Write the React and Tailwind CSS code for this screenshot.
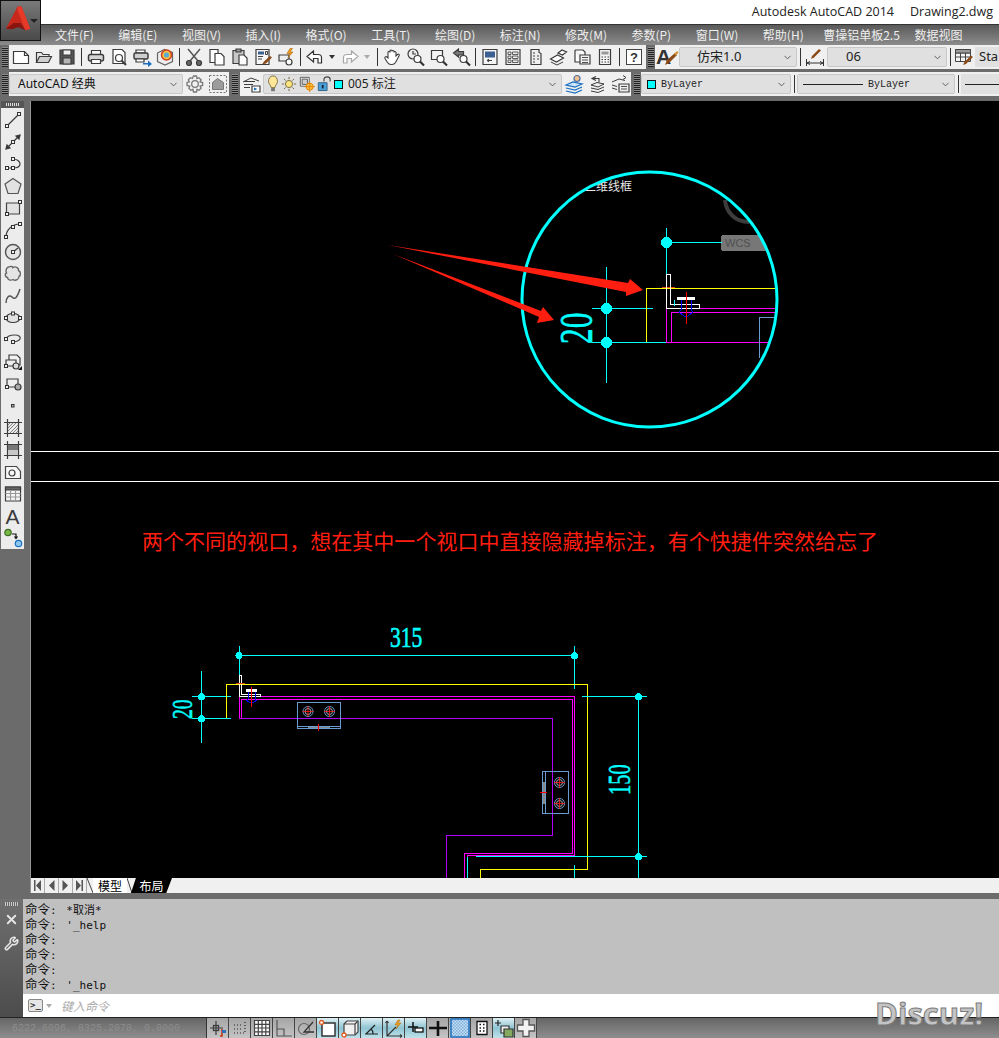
import {useId} from "react";
import {ChevronDown, X, Wrench} from "lucide-react";

const menus = [
    {label: "文件(F)"},
    {label: "编辑(E)"},
    {label: "视图(V)"},
    {label: "插入(I)"},
    {label: "格式(O)"},
    {label: "工具(T)"},
    {label: "绘图(D)"},
    {label: "标注(N)"},
    {label: "修改(M)"},
    {label: "参数(P)"},
    {label: "窗口(W)"},
    {label: "帮助(H)"},
    {label: "曹操铝单板2.5", className: "-ml-[5px]"},
    {label: "数据视图", className: "-ml-[10px]"},
];

const Ic = ({children, size = 20}) => (
    <svg width={size} height={size} viewBox="0 0 20 20" fill="none" stroke="#3c3c3c" strokeWidth="1.2">
        {children}
    </svg>
);

const Nd = ({x, y}) => <rect x={x - 1.5} y={y - 1.5} width="3" height="3" fill="#f4f4f4" stroke="#333" strokeWidth="1"/>;

const Btn = ({children, w = "w-[23px]"}) => <div className={`flex items-center justify-center h-full ${w}`}>{children}</div>;

const Sep = ({w = "w-[6px]"}) => (
    <div className={`flex items-center justify-center h-full ${w}`}>
        <div className="w-px h-[18px] bg-[#333]"/>
    </div>
);

const Grip = () => (
    <div className="w-[6px] h-[20px] bg-[repeating-linear-gradient(0deg,#222_0,#222_1px,#8a8a8a_1px,#8a8a8a_2px)]"/>
);

const Combo = ({children, className}) => (
    <div className={`flex items-center h-[20px] bg-[#e0e0e0] rounded-[2px] border border-[#c8c8c8] ${className}`}>
        <div className="flex-1 min-w-0 flex items-center overflow-hidden whitespace-nowrap">{children}</div>
        <ChevronDown size={11} color="#555" className="mr-[3px] shrink-0"/>
    </div>
);

const NewIcon = () => <Ic><path d="M2.5 4.5h11l4 4v8h-15z" fill="#fff"/><path d="M13.5 4.5v4h4"/></Ic>;
const OpenIcon = () => <Ic><path d="M2.5 15.5v-10h5l1.5 2h6v2" fill="#e8e8e8"/><path d="M2.5 15.5l3-6h12l-3 6z" fill="#cfcfcf"/></Ic>;
const SaveIcon = () => <Ic><path d="M3 3h14v14H3z" fill="#555"/><path d="M6 3h8v5H6z" fill="#f1f1f1"/><path d="M6 11h8v6H6z" fill="#b5b5b5"/></Ic>;
const PrintIcon = () => <Ic><path d="M5.5 3.5h9v4h-9z" fill="#fff"/><rect x="2.5" y="7.5" width="15" height="6.5" rx="2" fill="#d5d5d5" strokeWidth="1.5"/><path d="M5.5 12.5h9v4h-9z" fill="#fff"/></Ic>;
const PreviewIcon = () => <Ic><path d="M4 2.5h9l3 3v11H4z" fill="#fff"/><circle cx="10" cy="11" r="3.5"/><path d="M12.5 13.5l4.5 4.5" strokeWidth="2"/></Ic>;
const PublishIcon = () => <Ic><path d="M4 3h9v3H4z" fill="#fff"/><rect x="2" y="6" width="14" height="6" rx="1.5" fill="#cfcfcf" strokeWidth="1.5"/><path d="M4 12h8v3H4z" fill="#fff"/><path d="M11 16h5v-2.5l4 3.5-4 3v-2.500h-5z" fill="#1c6fc0" stroke="none"/></Ic>;
const PlotIcon = () => (
    <Ic>
        <path d="M2.500 6l7-3.500 8 3v9l-7.500 3.500-7.500-3.500z" fill="#eee" stroke="#666"/>
        <circle cx="11.500" cy="8" r="5" fill="#f0c040" stroke="#d04020" strokeWidth="1.500"/>
        <circle cx="11.500" cy="8" r="2.500" fill="#58a8d8" stroke="none"/>
    </Ic>
);
const CutIcon = () => (
    <Ic>
        <path d="M4 2l10 12M16 2L6 14" strokeWidth="1.500" stroke="#555"/>
        <circle cx="5" cy="16" r="2.500" fill="#666"/>
        <circle cx="15" cy="16" r="2.500" fill="#666"/>
    </Ic>
);
const CopyIcon = () => <Ic><path d="M3 2.500h8v13H3z" fill="#fff"/><path d="M8 6.500h6l3 3v8.500H8z" fill="#fff"/></Ic>;
const PasteIcon = () => <Ic><path d="M3 3.500h11v13H3z" fill="#c8c8c8"/><path d="M6 2h5v3H6z" fill="#999"/><path d="M9 8h5l3 3v7H9z" fill="#fff"/></Ic>;
const MatchIcon = () => (
    <Ic>
        <path d="M3 2.500h13v15H3z" fill="#f6f6f6"/>
        <path d="M5 4.500h6v3H5z" fill="#3b5f90" stroke="none"/>
        <path d="M12.500 4.500h2v3h-2zM5 9.500h5M5 12h4" strokeWidth="1"/>
        <path d="M9 17.500l4-1 6-6-2-1.500-6 5.500z" fill="#8a4a18" stroke="none"/>
    </Ic>
);
const BlockIcon = () => (
    <Ic>
        <path d="M3 8h10v6H3z" fill="#eee"/>
        <circle cx="13" cy="15" r="3" fill="#fff"/>
        <path d="M14 1.500l-3 5h3l-2 4 5-5.500h-3l2.500-3.500z" fill="#f0a020" stroke="#b06000" strokeWidth=".6"/>
    </Ic>
);
const UndoIcon = ({stroke = "#333", fill = "#fff"}) => (
    <Ic><path d="M8.500 4l-6.500 5.500 6.500 5.500v-3.500h4.500v4.500h3.500v-5.500c0-2-1.500-3-3.500-3H8.500z" fill={fill} stroke={stroke}/></Ic>
);
const RedoIcon = () => (
    <Ic><path d="M11.500 4l6.500 5.500-6.500 5.500v-3.500H7v4.500H3.500v-5.500c0-2 1.500-3 3.500-3h4.500z" fill="#fff" stroke="#a8a8a8"/></Ic>
);
const HandIcon = () => (
    <Ic><path d="M5 11V5.500c0-1.400 2-1.400 2 0V4c0-1.400 2-1.400 2 0v.5c0-1.400 2-1.400 2 0v1c0-1.400 2-1.400 2 0V9l1.500-1.500c1-1 2.500 0 1.500 1.500l-3.500 6.500c-1 1.500-2 2-3.500 2H8c-1.500 0-2.500-.5-3.500-2L2 11.500c-.8-1.400 1-2.500 2-1.500z" fill="#fff" strokeWidth="1.100"/></Ic>
);
const ZoomIcon = ({children}) => (
    <Ic>
        {children}
        <circle cx="11.500" cy="12" r="3.500" fill="#fff"/>
        <path d="M14 14.500l4 4" strokeWidth="2.200" stroke="#333"/>
    </Ic>
);
const PropsIcon = () => (
    <Ic>
        <path d="M3 2.500h14v15H3z" fill="#f5f5f5"/>
        <path d="M5 4.500h10v6H5z" fill="#3b5f90" stroke="none"/>
        <path d="M12 13.500H7m0 0l2-1.500m-2 1.500l2 1.500" strokeWidth="1"/>
    </Ic>
);
const GridBtnIcon = () => (
    <Ic>
        <path d="M3 2.500h14v15H3z" fill="#eee"/>
        <path d="M5 5h3v2.500H5zM9.500 5h5.500v2.500H9.500zM5 9h3v2.500H5zM9.500 9h5.500v2.500H9.500zM5 13h3v2.500H5zM9.500 13h5.500v2.500H9.500z" strokeWidth=".8"/>
    </Ic>
);
const PaletteIcon = () => <Ic><path d="M5 2.500h8v3l2 1v11H5z" fill="#eee"/><path d="M7 6h2M7 9h2M7 12h2M7 15h2M11 9h2M11 12h2" strokeWidth="1.200"/></Ic>;
const SheetIcon = () => (
    <Ic>
        <path d="M1.500 12l7-4 6 3-7 4z" fill="#fff"/>
        <path d="M9 6l4-3 4.500 2-4 3z" fill="#fff"/>
        <path d="M2 15l6 3 6-3" strokeWidth="1"/>
    </Ic>
);
const MarkupIcon = () => (
    <Ic>
        <path d="M3 3h8l2 2v3M3 3v12h5" fill="#fff"/>
        <path d="M8 8h10v9H8z" fill="#f2f2f2"/>
        <path d="M10 10.500h6M10 13h6M10 15.500h6" strokeWidth=".9"/>
    </Ic>
);
const CalcIcon = () => (
    <Ic>
        <path d="M4.500 2.500h11v15h-11z" fill="#f4f4f4"/>
        <path d="M6.500 4.500h7v3h-7z" fill="#999" stroke="none"/>
        <path d="M6.500 10h1.500M9.500 10H11M12.500 10H14M6.500 12.500h1.500M9.500 12.500H11M12.500 12.500H14M6.500 15h1.500M9.500 15H11M12.500 15H14" strokeWidth="1.200"/>
    </Ic>
);
const HelpIcon = () => (
    <svg width="20" height="20" viewBox="0 0 20 20">
        <rect x="2.500" y="2.500" width="15" height="15" fill="#fff" stroke="#444"/>
        <text x="10" y="15" textAnchor="middle" className="font-['Liberation_Sans',sans-serif] text-[13px] font-bold" fill="#333">?</text>
    </svg>
);
const TextStyleIcon = () => (
    <svg width="24" height="22" viewBox="0 0 24 22">
        <text x="1" y="18" className="font-['Liberation_Sans',sans-serif] text-[21px] font-bold" fill="#333">A</text>
        <path d="M10 19l4-2 8-8-2-2-8 7z" fill="#8a4a18"/>
        <path d="M19 8l3-3 1.500 1.500-2.500 3z" fill="#d09030"/>
    </svg>
);
const DimIcon = () => (
    <svg width="20" height="20" viewBox="0 0 20 20" fill="none" stroke="#333">
        <path d="M1.500 12v7M18.500 12v7M2 16h16M2 16l3-1.500M2 16l3 1.500M18 16l-3-1.500M18 16l-3 1.500"/>
        <path d="M6 12l3-1.500 7-7-2-1.500-7 7z" fill="#8a4a18" stroke="none"/>
    </svg>
);
const TableStyleIcon = () => (
    <svg width="20" height="20" viewBox="0 0 20 20" fill="none" stroke="#444">
        <path d="M1.500 2.500h15v12h-15zM1.500 6h15M1.500 10h15M6.500 6v8.500M11.500 6v8.500" fill="#f5f5f5"/>
        <path d="M1.500 2.500h15V6h-15z" fill="#999"/>
        <path d="M9 18l3-1 7-7-2-1.500-6.500 6.500z" fill="#8a4a18" stroke="none"/>
    </svg>
);
const GearIcon = () => (
    <svg width="20" height="20" viewBox="0 0 20 20" fill="none" stroke="#777" strokeWidth="1.300">
        <circle cx="10" cy="10" r="3.300"/>
        <path d="M8.500 2h3l.5 2.500 2-.8 2.100 2.100-1 2 2.500.7v3l-2.500.7 1 2-2.100 2.100-2-1-.5 2.700h-3l-.6-2.700-2 1-2.100-2.100 1-2L2 11.500v-3l2.300-.7-1-2 2.100-2.100 2 .8z"/>
    </svg>
);
const WorkspaceIcon = () => (
    <svg width="20" height="20" viewBox="0 0 20 20" fill="none" stroke="#777">
        <path d="M1.500 1.500h17v17h-17z" strokeDasharray="2 1.500"/>
        <path d="M4.500 15.500v-7l5-4 6 4v7z" fill="#9c9c9c"/>
    </svg>
);
const LayerMgrIcon = () => (
    <Ic>
        <path d="M2 8l8-4 8 3" strokeWidth="1"/>
        <path d="M3 7.500h11M3 10.500h9M3 13.500h6" strokeWidth="1"/>
        <path d="M11 12h8v6h-8z" fill="#fff"/>
        <path d="M13 14l2 1-2 1" fill="#1c6fc0" stroke="#1c6fc0"/>
    </Ic>
);
const BulbIcon = () => (
    <svg width="12" height="18" viewBox="0 0 16 20" preserveAspectRatio="none">
        <path d="M8 1C4 1 2 4 2 7c0 3 3 4 3.500 7h5C11 11 14 10 14 7c0-3-2-6-6-6z" fill="#ffe79a" stroke="#6e6030"/>
        <path d="M5.500 14.500h5V18h-5z" fill="#777"/>
    </svg>
);
const SunIcon = () => (
    <svg width="16" height="16" viewBox="0 0 18 18" stroke="#6e6030" fill="#ffe680">
        <circle cx="9" cy="9" r="4"/>
        <path d="M9 1v2.500M9 14.500V17M1 9h2.500M14.500 9H17M3.300 3.300l1.800 1.800M12.900 12.900l1.800 1.800M14.700 3.300l-1.800 1.800M5.100 12.900l-1.800 1.800"/>
    </svg>
);
const VpSunIcon = () => (
    <svg width="16" height="16" viewBox="0 0 18 18">
        <path d="M1.500 1.500h10v10h-10z" fill="#eee" stroke="#555"/>
        <path d="M3.500 3.500h6v6h-6z" fill="#ccc" stroke="#555"/>
        <circle cx="12" cy="12" r="4" fill="#ffc040" stroke="#e08000"/>
        <path d="M12 6v12M6 12h12" stroke="#e08000"/>
    </svg>
);
const LockIcon = () => (
    <svg width="14" height="18" viewBox="0 0 16 20" fill="none">
        <path d="M8 7V4.500C8 1 15 1 15 4.500V7" stroke="#444" strokeWidth="1.300"/>
        <path d="M1.500 8.500h10v9h-10z" fill="#4aa0d8" stroke="#2a5a80"/>
        <rect x="5.500" y="11" width="2" height="4" fill="#123"/>
    </svg>
);
const LayerFreezeIcon = () => (
    <Ic>
        <circle cx="13" cy="4.500" r="3" fill="#f0c090" stroke="#5070a0"/>
        <path d="M2 11l7-3 9 2-7 3z" fill="#cfe4f6" stroke="#1c6fc0"/>
        <path d="M2 14l9 2 7-3M2 17l9 2 7-3" stroke="#1c6fc0"/>
    </Ic>
);
const LayerPrevIcon = () => (
    <Ic>
        <path d="M9 2.500L5 4.500l4 2M5 4.500h7v4" strokeWidth="1.100"/>
        <path d="M4 11l6-2.500 7 1.500-6 3zM4 14l7 1.500 6-2.500M4 17l7 1.500 6-2.500" strokeWidth="1"/>
    </Ic>
);
const LayerIsoIcon = () => (
    <Ic>
        <path d="M2 8l7-3 6 1.500M2 11l5 1.500M2 14l5 1.500" strokeWidth="1"/>
        <path d="M13 1.500l3 2-3 2" strokeWidth="1"/>
        <path d="M9 10h10v8H9z" fill="#eee"/>
        <path d="M11 12.500h6M11 15h6" strokeWidth=".9"/>
    </Ic>
);

// left draw palette
const paletteIcons = [
    <Ic key="line"><path d="M4 16L16 4"/><Nd x={4} y={16}/><Nd x={16} y={4}/></Ic>,
    <Ic key="xline"><path d="M3 17L17 3" /><path d="M3 17l1-4 3 3zM17 3l-1 4-3-3z" fill="#333"/><Nd x={10} y={10}/></Ic>,
    <Ic key="pline"><path d="M4 14h6c4 0 7-1.500 7-4s-3-5-7-5"/><Nd x={4} y={14}/><Nd x={10} y={14}/><Nd x={10} y={5}/></Ic>,
    <Ic key="polygon"><path d="M10 2.500l8 5.500-3 9.500H5L2 8z" fill="#e2e2e2" stroke="#555"/></Ic>,
    <Ic key="rect"><path d="M3.500 5h13v11h-13z" fill="#e2e2e2" stroke="#444"/><Nd x={4} y={16}/><Nd x={17} y={4}/></Ic>,
    <Ic key="arc"><path d="M3 17c0-7 6-13 14-13"/><Nd x={3} y={17}/><Nd x={10} y={7}/><Nd x={17} y={4}/></Ic>,
    <Ic key="circle"><circle cx="10" cy="10" r="7.500" fill="#e4e4e4" stroke="#555" strokeWidth="1.400"/><path d="M10 10l5-4"/><Nd x={10} y={10}/></Ic>,
    <Ic key="cloud"><path d="M6 3c2-1.500 4 0 4 .5 2-1.500 6 0 5.500 3 2.500 1 2.500 5 .5 6 .5 2.500-3.500 5-6 3-2.500 1.500-5.500 0-5.500-2C2 13 1.500 9.500 3.500 9 2 6 4 3 6 3z" fill="#e4e4e4" stroke="#666" strokeWidth="1.400"/></Ic>,
    <Ic key="spline"><path d="M3 17c0-5 3-9 6-6s5 1 8-8" stroke="#555" strokeWidth="1.500"/></Ic>,
    <Ic key="ellipse"><ellipse cx="10" cy="10" rx="7" ry="4.500" fill="#e2e2e2"/><Nd x={3} y={10}/><Nd x={17} y={10}/><Nd x={10} y={5.500}/></Ic>,
    <Ic key="earc"><path d="M3 9c1-3 5-4 9-4s6 2 5 4-5 3-7 3" stroke="#444"/><Nd x={3} y={9}/><Nd x={10} y={12}/></Ic>,
    <Ic key="insert"><path d="M6 8V3h8l3 3v7h-3" fill="#f2f2f2"/><path d="M3 8h10v6H3z" fill="#eee"/><circle cx="13" cy="14" r="3" fill="#ddd"/><Nd x={3} y={14}/><path d="M15 18h4v-4z" fill="#111" stroke="none"/></Ic>,
    <Ic key="block"><path d="M4 5h11v8H4z" fill="#eee"/><circle cx="15" cy="13" r="3" fill="#aaa"/><Nd x={4} y={13}/></Ic>,
    <Ic key="point"><rect x="8.500" y="8.500" width="2.500" height="2.500" fill="#bbb" stroke="#333" strokeWidth="1"/></Ic>,
    <Ic key="hatch"><path d="M4.500 1v18M15.500 1v18M1 4.500h18M1 15.500h18"/><path d="M5 7l2-2M5 10l5-5M5 13l8-8M7 15l8-8M10 15l5-5M13 15l2-2" stroke="#777" strokeWidth=".9"/></Ic>,
    <Ic key="gradient"><path d="M4.500 1v18M15.500 1v18M1 4.500h18M1 15.500h18"/><path d="M5 5h10v10H5z" fill="#777" stroke="none"/><path d="M5 10h10v5H5z" fill="#c8c8c8" stroke="none"/></Ic>,
    <Ic key="region"><path d="M2.500 4.500h11l4 5v7h-15z" fill="#f6f6f6" stroke="#444"/><circle cx="9" cy="11" r="3" /></Ic>,
    <Ic key="table"><path d="M2.500 3h15v14h-15z" fill="#f6f6f6"/><path d="M2.500 3h15v3h-15z" fill="#666"/><path d="M2.500 9.500h15M2.500 13h15M7.500 6v11M12.500 6v11" stroke="#999"/></Ic>,
    <div key="text" className="font-['Liberation_Sans',sans-serif] text-[21px] leading-none text-[#3a3a3a]">A</div>,
    <Ic key="addsel"><circle cx="5" cy="4.500" r="3.200" fill="#7ab648" stroke="#3a7020"/><path d="M9 6h4v4M11.500 8.500l1.500 2 1.500-2" stroke="#111"/><circle cx="15.500" cy="15.500" r="3.200" fill="#8cc8f0" stroke="#1c6fc0"/></Ic>,
];

const StatusIcon = ({i}) => {
    switch (i) {
        case 0:
            return <Ic><path d="M8 3v14M2 10h13"/><rect x="5.500" y="7.500" width="5" height="5" fill="none" strokeWidth="1.300"/><path d="M14 11v7h-2" stroke="#c83010" strokeWidth="1.500"/><rect x="14" y="12" width="4" height="3" fill="#2a70c0" stroke="none"/></Ic>;
        case 1:
            return <Ic><path d="M4 15h12M15 4v11" strokeDasharray="1 2" stroke="#222"/><path d="M4 7h9M4 11h9" strokeDasharray="1 2" stroke="#222"/></Ic>;
        case 2:
            return <Ic><path d="M2.500 2.500h15v15h-15zM2.500 6.300h15M2.500 10h15M2.500 13.800h15M6.300 2.500v15M10 2.500v15M13.800 2.500v15" fill="#fff" stroke="#444"/></Ic>;
        case 3:
            return <Ic><path d="M3 2v16h15M3 11h7v7" stroke="#555"/></Ic>;
        case 4:
            return <Ic><circle cx="8" cy="11" r="5.500" stroke="#666"/><path d="M17 4L8 14h10" stroke="#333" strokeWidth="1.300"/></Ic>;
        case 5:
            return <Ic><path d="M4 5h13v13H4z" fill="#fff" stroke="#333" strokeWidth="1.500"/><circle cx="3.500" cy="4.500" r="2" fill="#fff" stroke="#e05a20" strokeWidth="1.300"/></Ic>;
        case 6:
            return <Ic><path d="M4 6l3-3h11v11l-3 3H4z" fill="#f0f0f0" stroke="#444"/><path d="M4 6h11v11M15 6l3-3" stroke="#444"/><circle cx="4" cy="17" r="2" fill="#fff" stroke="#e05a20" strokeWidth="1.300"/></Ic>;
        case 7:
            return <Ic><path d="M4 16L13 7M3 16h13" stroke="#222" strokeWidth="1.200"/><path d="M9 11c1.500 1 2 3 2 5" stroke="#222"/></Ic>;
        case 8:
            return <Ic><path d="M3 3v15h15M3 18L12 9" stroke="#333"/><path d="M3 3l-1.500 2M3 3l1.500 2M18 18l-2-1.500M18 18l-2 1.500" stroke="#333"/><path d="M14 2l-3 5h3l-2 4 5-6h-3l2-3z" fill="#f0a020" stroke="#b06000" strokeWidth=".5"/></Ic>;
        case 9:
            return <Ic><path d="M2 9h10M7 4v10" stroke="#111" strokeWidth="1.500"/><rect x="9" y="10" width="8" height="4" fill="#fff" stroke="#111" strokeWidth="1.300"/></Ic>;
        case 10:
            return <Ic><path d="M1 10h18M10 3v15" stroke="#111" strokeWidth="2.600"/></Ic>;
        case 11:
            return (
                <svg width="20" height="20" viewBox="0 0 20 20">
                    <defs>
                        <pattern id="transpCheck" width="3" height="3" patternUnits="userSpaceOnUse">
                            <rect width="3" height="3" fill="#c8dff2"/>
                            <rect width="1.500" height="1.500" fill="#7fb0dc"/>
                            <rect x="1.500" y="1.500" width="1.500" height="1.500" fill="#7fb0dc"/>
                        </pattern>
                    </defs>
                    <rect x="1" y="1" width="18" height="18" fill="url(#transpCheck)" stroke="#1c6fc0" strokeWidth="1.500"/>
                </svg>
            );
        case 12:
            return <Ic><path d="M5 3.500h10v13H5z" fill="#fff" stroke="#111" strokeWidth="1.300"/><path d="M7.500 6.500h1.500M11 6.500h1.500M7.500 10h1.500M11 10h1.500M7.500 13h1.500M11 13h1.500" stroke="#111" strokeWidth="1.500"/></Ic>;
        case 13:
            return <Ic><path d="M1 5h6M4 2v6" stroke="#222"/><path d="M7 8h8v7H7z" fill="#eee" stroke="#333"/><path d="M10 11h9v8h-9z" fill="#84a860" stroke="#333"/></Ic>;
        default:
            return <Ic><path d="M7 1.500h6V7h5.500v6H13v5.500H7V13H1.500V7H7z" fill="#f2f2f2" stroke="#555" strokeWidth="1.300"/></Ic>;
    }
};

const activeStatus = [5, 6, 7, 8, 9, 13];

// viewport drawing, coordinates are page pixels
const CadDrawing = () => {
    const clipId = useId();
    const cyan = "#00ffff";
    const magenta = "#ff00ff";
    const yellow = "#ffff00";
    const violet = "#b400ff";
    const steel = "#6a9ad0";
    return (
        <svg className="block" width="968" height="777" viewBox="31 101 968 777" fill="none" shapeRendering="crispEdges">
            <defs>
                <clipPath id={clipId}>
                    <circle cx="649.500" cy="299.500" r="127"/>
                </clipPath>
            </defs>

            <path d="M31 451.500h968M31 481.500h968" stroke="#fff"/>

            {/* top viewport, seen through the round clip */}
            <g clipPath={`url(#${clipId})`}>
                <path d="M725 200c1 12 10 22 24 22" stroke="#3c3c3c" strokeWidth="4" shapeRendering="auto"/>
                <rect x="721" y="235" width="46" height="16" rx="3" fill="#777"/>
                <text x="725" y="247" fill="#505050" className="font-['Liberation_Sans',sans-serif] text-[11px]">WCS</text>
                <text x="584" y="191" fill="#e8e8e8" className="font-['Noto_Sans_CJK_SC',sans-serif] text-[12px]">二维线框</text>

                <path d="M666.500 228v46M666 242.500h56" stroke={cyan}/>
                <path d="M606.500 267v116M592 308.500h61M592 342.500h61M653 342.500h13" stroke={cyan}/>
                <path d="M646.500 342V288.500H776" stroke={yellow}/>
                <path d="M666.500 342.500v-34H776M671.500 342.500v-30H776M666.500 342.500H770" stroke={magenta}/>
                <path d="M759.500 358v-40.500H776" stroke={steel}/>
                <path d="M662 287.500h13" stroke="#e04a10"/>
                <path d="M666.500 274.500h4v30h29v4h-33z" stroke="#fff"/>
                <path d="M677 297.500h17v2h-17z" fill="#fff" stroke="#fff"/>
                <path d="M681 300v10l-2 2 5 4h4l5-4-2-2v-10" stroke="#0000ff"/>
                <path d="M686.500 292v32" stroke="#ff0000"/>
                <path d="M674.500 300v6" stroke={cyan}/>
            </g>

            <circle cx="649.500" cy="299.500" r="127.500" stroke={cyan} strokeWidth="3" shapeRendering="auto"/>
            <circle cx="666.500" cy="242.500" r="5.500" fill={cyan}/>
            <circle cx="606.500" cy="308.500" r="5.500" fill={cyan}/>
            <circle cx="606.500" cy="342.500" r="5.500" fill={cyan}/>
            <text transform="translate(592 344) rotate(-90) scale(.68 1)" fill={cyan} stroke={cyan} strokeWidth=".6" shapeRendering="auto" className="font-['Liberation_Serif',serif] text-[46px]">20</text>

            {/* the two red arrows drawn over the screen */}
            <g shapeRendering="auto" fill="#ff1e10">
                <path d="M388 245L628 283l2-4 13 11-17 6 0-4z"/>
                <path d="M393 254L541 311l2-4 11 13-17 3 2-6z"/>
            </g>

            <text x="142" y="549" fill="#ff1e10" textLength="736" className="font-['Noto_Sans_CJK_SC',sans-serif] text-[21px]" shapeRendering="auto">
                两个不同的视口，想在其中一个视口中直接隐藏掉标注，有个快捷件突然给忘了
            </text>

            {/* bottom viewport */}
            <text transform="translate(390 647) scale(.72 1)" fill={cyan} stroke={cyan} strokeWidth=".6" shapeRendering="auto" className="font-['Liberation_Serif',serif] text-[30px]">315</text>
            <path d="M239 655.500h335M239.500 646v38M574.500 646v43" stroke={cyan}/>
            <circle cx="239" cy="655.500" r="3.500" fill={cyan}/>
            <circle cx="574.500" cy="655.500" r="3.500" fill={cyan}/>

            <path d="M201.500 671v72M192 696.500h39M192 718.500h39" stroke={cyan}/>
            <circle cx="201.500" cy="696.500" r="3.500" fill={cyan}/>
            <circle cx="201.500" cy="718.500" r="3.500" fill={cyan}/>
            <text transform="translate(192 719) rotate(-90) scale(.68 1)" fill={cyan} stroke={cyan} strokeWidth=".5" shapeRendering="auto" className="font-['Liberation_Serif',serif] text-[29px]">20</text>

            <path d="M226.500 718v-33.500h361v185h-107v8.500" stroke={yellow}/>
            <path d="M239.500 718v-21.500h335v159h-107.500v22" stroke={magenta}/>
            <path d="M241.500 718v-18.500h330.500v153.500h-107.500v25" stroke={magenta}/>
            <path d="M239 718.500h313.500v117h-106v42.500" stroke={violet}/>

            <path d="M476 856.500h171M467.500 856.500V878M574.500 865v13M582 696.500h65M638.500 696.500V878" stroke={cyan}/>
            <circle cx="638.500" cy="696.500" r="3.500" fill={cyan}/>
            <circle cx="638.500" cy="856.500" r="3.500" fill={cyan}/>
            <text transform="translate(630 795) rotate(-90) scale(.66 1)" fill={cyan} stroke={cyan} strokeWidth=".5" shapeRendering="auto" className="font-['Liberation_Serif',serif] text-[31px]">150</text>

            <path d="M239.500 675.500h2v19h19v2h-21z" stroke="#fff"/>
            <path d="M246 690.500h11" stroke="#fff" strokeWidth="2.500"/>
            <path d="M248 692v7l-1.500 1.500 3.500 2h3l3.500-2L255 699v-7" stroke="#0000ff"/>
            <path d="M251.500 687v20" stroke="#ff0000"/>
            <path d="M236 683.500h9" stroke="#e04a10"/>

            {/* hinge plates */}
            <path d="M297.500 702.500h43v26h-43zM297.500 726.500h43" stroke={steel}/>
            <path d="M308 727.500h22" stroke="#888" strokeWidth="1.500"/>
            <path d="M318.500 724v7" stroke="#ff0000"/>
            {[[308, 711.500], [329.500, 711.500], [559.500, 782.500], [559.500, 803.500]].map(([cx, cy]) => (
                <g key={`${cx}-${cy}`} shapeRendering="auto">
                    <circle cx={cx} cy={cy} r="5" stroke={steel}/>
                    <circle cx={cx} cy={cy} r="3" stroke="#aaa"/>
                    <path d={`M${cx - 5.500} ${cy}h11M${cx} ${cy - 5.500}v11`} stroke="#ff2020" strokeWidth=".8"/>
                </g>
            ))}
            <path d="M542.500 771.500h26v42h-26zM545.500 771.500v42" stroke={steel}/>
            <path d="M544 782v22" stroke="#888" strokeWidth="2.500"/>
            <path d="M540 792.500h7" stroke="#ff0000"/>
        </svg>
    );
};

const NavBtn = ({d}) => (
    <div className="flex items-center justify-center w-[14px] h-full border-r border-[#aaa]">
        <svg width="9" height="11" viewBox="0 0 9 11">
            <path d={d} fill="#555"/>
        </svg>
    </div>
);

const CmdLine = ({text}) => (
    <div className="h-[15.200px] leading-[15px] whitespace-pre">
        <span className="text-[12.500px]">命令</span>: <span className="ml-[3px]">{text}</span>
    </div>
);

const App = () => {
    return (
        <div className="relative w-[999px] h-[1038px] overflow-hidden flex flex-col bg-[#6b6b6b] font-['Noto_Sans','Noto_Sans_CJK_SC',sans-serif]">
            {/* app button */}
            <div className="absolute left-0 top-0 z-10 flex items-center w-[41px] h-[41px] border border-[#111] bg-linear-to-b from-[#7a7a7a] to-[#4a4a4a]">
                <svg width="40" height="40" viewBox="0 0 40 40">
                    <path d="M5 28L17 5h4l9 23-5 1.500-5-7.500-7 2z" fill="#c8281c"/>
                    <path d="M17 5h4l9 23-5 1.500L17 9z" fill="#e83a28"/>
                    <path d="M5 28l8-6 7 0 5 7.500-7-3-7 2z" fill="#8a1410"/>
                </svg>
                <div className="absolute right-[2px] top-[18px] w-0 h-0 border-x-[4px] border-x-transparent border-t-[4px] border-t-[#222]"/>
            </div>

            {/* title bar */}
            <div className="flex items-center justify-end gap-4 h-[24px] pr-[6px] bg-white text-[12.500px] text-[#222] font-['Open_Sans','Noto_Sans',sans-serif]">
                <span>Autodesk AutoCAD 2014</span>
                <span>Drawing2.dwg</span>
            </div>

            {/* menu bar */}
            <div className="flex items-center gap-[24.500px] h-[21px] pl-[55px] border-t border-[#333] bg-linear-to-b from-[#5a5a5a] to-[#8c8c8c] text-[12px] text-[#eee] whitespace-nowrap font-['Noto_Sans_CJK_SC',sans-serif]">
                {menus.map((m) => (
                    <span key={m.label} className={m.className}>{m.label}</span>
                ))}
            </div>

            {/* standard toolbar */}
            <div className="flex items-center h-[24px] pl-[2px] bg-[#6b6b6b]">
                <Grip/>
                <div className="flex items-center w-[637px] h-full ml-px bg-[#f0f0f0]">
                    <Btn><NewIcon/></Btn>
                    <Btn><OpenIcon/></Btn>
                    <Btn><SaveIcon/></Btn>
                    <Sep/>
                    <Btn><PrintIcon/></Btn>
                    <Btn><PreviewIcon/></Btn>
                    <Btn><PublishIcon/></Btn>
                    <Btn><PlotIcon/></Btn>
                    <Sep/>
                    <Btn><CutIcon/></Btn>
                    <Btn><CopyIcon/></Btn>
                    <Btn><PasteIcon/></Btn>
                    <Btn><MatchIcon/></Btn>
                    <Btn><BlockIcon/></Btn>
                    <Sep/>
                    <Btn><UndoIcon/></Btn>
                    <Btn w="w-[12px]"><div className="w-0 h-0 border-x-[3px] border-x-transparent border-t-[4px] border-t-[#333]"/></Btn>
                    <Btn><RedoIcon/></Btn>
                    <Btn w="w-[12px]"><div className="w-0 h-0 border-x-[3px] border-x-transparent border-t-[4px] border-t-[#aaa]"/></Btn>
                    <Sep w="w-[8px]"/>
                    <Btn><HandIcon/></Btn>
                    <Btn><ZoomIcon><circle cx="7" cy="7" r="5" fill="#eee"/><path d="M7 4v3h3"/></ZoomIcon></Btn>
                    <Btn><ZoomIcon><path d="M2.500 3.500h11v9h-11z" fill="#f4f4f4"/></ZoomIcon></Btn>
                    <Btn><ZoomIcon><path d="M1.500 6l5-4v2.500h5V8h-5v2z" fill="#777"/></ZoomIcon></Btn>
                    <Sep w="w-[5px]"/>
                    <Btn><PropsIcon/></Btn>
                    <Btn><GridBtnIcon/></Btn>
                    <Btn><PaletteIcon/></Btn>
                    <Btn><SheetIcon/></Btn>
                    <Btn><MarkupIcon/></Btn>
                    <Btn><CalcIcon/></Btn>
                    <Sep/>
                    <Btn><HelpIcon/></Btn>
                </div>
                <div className="w-[2px]"/>
                <Grip/>
                <div className="flex-1 flex items-center h-full min-w-0 ml-px overflow-hidden bg-[#f0f0f0]">
                    <Btn w="w-[24px]"><TextStyleIcon/></Btn>
                    <Combo className="w-[118px] shrink-0 text-[13px] text-[#222] pl-[17px]">仿宋1.0</Combo>
                    <Sep/>
                    <Btn w="w-[24px]"><DimIcon/></Btn>
                    <Combo className="w-[120px] shrink-0 text-[13px] text-[#222] pl-[18px]">06</Combo>
                    <Sep/>
                    <Btn w="w-[22px]"><TableStyleIcon/></Btn>
                    <div className="flex items-center flex-1 h-[20px] pl-[4px] bg-[#e0e0e0] text-[13px] text-[#222] overflow-hidden">Sta</div>
                </div>
            </div>

            <div className="h-[3px] bg-[#6b6b6b]"/>

            {/* workspace and layers toolbar */}
            <div className="flex items-center h-[24px] pl-[2px] bg-[#6b6b6b]">
                <Grip/>
                <div className="flex items-center w-[220px] h-full ml-px bg-[#f0f0f0]">
                    <Combo className="w-[174px] text-[12px] text-[#111] pl-[8px]">AutoCAD 经典</Combo>
                    <Btn><GearIcon/></Btn>
                    <Btn><WorkspaceIcon/></Btn>
                </div>
                <div className="w-[3px]"/>
                <Grip/>
                <div className="flex items-center w-[391px] h-full ml-[2px] bg-[#f0f0f0]">
                    <Btn><LayerMgrIcon/></Btn>
                    <Combo className="w-[300px] text-[12px] text-[#222] pl-[3px]">
                        <div className="flex items-center gap-[2px]">
                            <BulbIcon/>
                            <SunIcon/>
                            <VpSunIcon/>
                            <LockIcon/>
                            <div className="w-[9px] h-[9px] ml-[1px] bg-[#00ffff] border border-[#111]"/>
                            <span className="ml-[3px]">005 标注</span>
                        </div>
                    </Combo>
                    <Btn><LayerFreezeIcon/></Btn>
                    <Btn><LayerPrevIcon/></Btn>
                    <Btn><LayerIsoIcon/></Btn>
                </div>
                <div className="w-[3px]"/>
                <Grip/>
                <div className="flex-1 flex items-center h-full min-w-0 ml-px overflow-hidden bg-[#f0f0f0] font-['Liberation_Mono',monospace] text-[10px] text-[#222]">
                    <Combo className="w-[150px] shrink-0 pl-[5px]">
                        <div className="w-[9px] h-[9px] mr-[5px] bg-[#00ffff] border border-[#111]"/>ByLayer
                    </Combo>
                    <Sep/>
                    <Combo className="w-[158px] shrink-0 pl-[5px]">
                        <div className="w-[60px] h-px mr-[5px] bg-[#222]"/>ByLayer
                    </Combo>
                    <Sep/>
                    <div className="flex items-center flex-1 h-[20px] pl-[4px] bg-[#e0e0e0]">
                        <div className="w-full h-px bg-[#222]"/>
                    </div>
                </div>
            </div>

            <div className="h-[5px] bg-[#6b6b6b]"/>

            <div className="flex flex-1 min-h-0 flex-col">
                <div className="flex">
                    {/* draw palette */}
                    <div className="w-[31px] h-[792px] pl-px border-r border-[#959595] bg-[#6b6b6b]">
                        <div className="w-[23px]">
                            <div className="flex items-center justify-center h-[7px] bg-[#555]">
                                <div className="w-[14px] h-[3px] bg-[repeating-linear-gradient(90deg,#ddd_0,#ddd_1px,#555_1px,#555_2px)]"/>
                            </div>
                            <div className="flex flex-col items-center pt-px bg-[#ececec]">
                                {paletteIcons.map((icon) => (
                                    <div key={icon.key} className="flex items-center justify-center w-full h-[22px]">{icon}</div>
                                ))}
                            </div>
                        </div>
                    </div>

                    <div className="flex-1 min-w-0 flex flex-col">
                        <div className="h-[777px] bg-black">
                            <CadDrawing/>
                        </div>

                        {/* model and layout tabs */}
                        <div className="flex items-center h-[15px] bg-[#f0f0f0] text-[12px] leading-none font-['Noto_Sans_CJK_SC',sans-serif]">
                            <div className="flex items-center h-full">
                                <NavBtn d="M1 0h1.500v11H1zM8 0v11L3 5.500z"/>
                                <NavBtn d="M7.500 0v11L2 5.500z"/>
                                <NavBtn d="M1.500 0v11L7 5.500z"/>
                                <NavBtn d="M1 0v11l5-5.500zM6.500 0H8v11H6.500z"/>
                            </div>
                            <svg width="6" height="15" viewBox="0 0 6 15" className="shrink-0">
                                <path d="M0 0l6 15" stroke="#444"/>
                            </svg>
                            <div className="flex items-center justify-center w-[34px] h-full bg-white text-black">模型</div>
                            <svg width="5" height="15" viewBox="0 0 5 15" className="shrink-0">
                                <path d="M0 0l5 15" stroke="#444"/>
                            </svg>
                            <div className="flex items-center justify-center w-[41px] h-full -ml-px bg-black text-white [clip-path:polygon(0_100%,12%_0,100%_0,86%_100%)]">布局</div>
                        </div>
                    </div>
                </div>

                <div className="h-[6px] bg-[#6b6b6b]"/>

                {/* command window */}
                <div className="flex h-[118px]">
                    <div className="flex flex-col items-center w-[23px] bg-linear-to-b from-[#707070] to-[#4c4c4c]">
                        <div className="w-[14px] h-[4px] mt-[3px] bg-[repeating-linear-gradient(90deg,#ccc_0,#ccc_1px,#666_1px,#666_2px)]"/>
                        <X size={15} color="#e6e6e6" strokeWidth={3} className="mt-[6px]"/>
                        <Wrench size={15} color="#e6e6e6" strokeWidth={2.500} className="mt-[9px]"/>
                    </div>
                    <div className="flex-1 min-w-0 flex flex-col">
                        <div className="h-[95px] pl-[2px] pt-[2.500px] bg-[#c0c0c0] text-[#111] text-[11px] font-['DejaVu_Sans_Mono','Noto_Sans_CJK_SC',monospace]">
                            <CmdLine text="*取消*"/>
                            <CmdLine text="'_help"/>
                            <CmdLine text=""/>
                            <CmdLine text=""/>
                            <CmdLine text=""/>
                            <CmdLine text="'_help"/>
                        </div>
                        <div className="flex items-center h-[23px] pl-[5px] bg-white">
                            <div className="flex items-center justify-center w-[15px] h-[13px] rounded-[2px] border border-[#888] bg-[#e6e6e6] text-[9px] leading-none font-bold text-[#333] font-['DejaVu_Sans_Mono',monospace]">&gt;_</div>
                            <div className="w-0 h-0 ml-[3px] border-x-[3px] border-x-transparent border-t-[4px] border-t-[#aaa]"/>
                            <span className="ml-[9px] text-[12px] italic text-[#aaa] font-['Noto_Sans_CJK_SC',sans-serif]">键入命令</span>
                        </div>
                    </div>
                </div>

                <div className="h-px bg-[#222]"/>

                {/* status bar */}
                <div className="relative flex items-stretch h-[20px] bg-linear-to-b from-[#666] to-[#8e8e8e]">
                    <div className="flex items-center w-[206px] pl-[12px] text-[10px] text-[#8d8d8d] font-['Liberation_Mono',monospace] whitespace-pre">
                        6222.6096, 8325.2078, 0.0000
                    </div>
                    <div className="flex border-l border-[#333]">
                        {Array.from({length: 15}).map((_, i) => (
                            <div
                                key={i}
                                className={`flex items-center justify-center w-[22px] border-r border-[#444] ${
                                    activeStatus.includes(i)
                                        ? "bg-linear-to-b from-[#dff1f4] via-[#8fc4d3] to-[#bfe3ea]"
                                        : "bg-linear-to-b from-[#a6a6a6] to-[#c4c4c4]"
                                }`}
                            >
                                <StatusIcon i={i}/>
                            </div>
                        ))}
                    </div>
                </div>
            </div>

            {/* forum watermark */}
            <div className="absolute left-[875px] top-[996px] text-[31px] leading-[34px] font-bold text-[#c4c4c4] [-webkit-text-stroke:1px_#7c7c7c] font-['Open_Sans',sans-serif]">
                Discuz!
            </div>
        </div>
    );
};

export default App;
